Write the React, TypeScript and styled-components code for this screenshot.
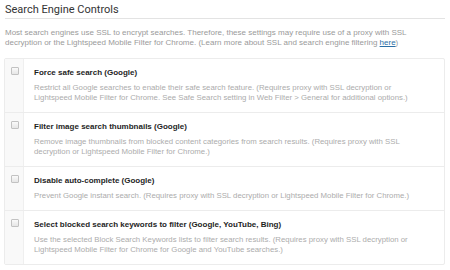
import React from "react";
import styled, { createGlobalStyle } from "styled-components";

const Global = createGlobalStyle`
  html, body { margin: 0; padding: 0; background: #fff; }
  body { font-family: "Liberation Sans", Arial, sans-serif; }
`;

const Page = styled.div`
  width: 450px;
  height: 270px;
  box-sizing: border-box;
  padding: 3px 5px 0 5px;
  overflow: hidden;
`;

const Heading = styled.h2`
  margin: 0;
  font-family: Roboto, "Liberation Sans", sans-serif;
  font-weight: 400;
  font-size: 11px;
  line-height: 13px;
  color: #333;
  padding-bottom: 2px;
  border-bottom: 1px solid #e3e3e3;
  width: 440px;
`;

const Intro = styled.p`
  margin: 9px 0 0 0;
  font-size: 8px;
  line-height: 10px;
  color: #9a9a9a;
  width: 425px;
`;

const Link = styled.a`
  color: #2a6ea6;
  text-decoration: underline;
`;

const Table = styled.div`
  margin-top: 10px;
  width: 441px;
  margin-left: -1px;
  border: 1px solid #ececec;
  border-radius: 2px;
  box-sizing: border-box;
`;

const Row = styled.div<{ $first?: boolean }>`
  display: grid;
  grid-template-columns: 19px 1fr;
  border-top: ${(p) => (p.$first ? "none" : "1px solid #ececec")};
`;

const BoxCell = styled.div`
  background: #f9f9f9;
  border-right: 1px solid #efefef;
  padding-top: 8px;
  display: flex;
  justify-content: center;
  align-items: flex-start;
`;

const Check = styled.input`
  appearance: none;
  -webkit-appearance: none;
  margin: 0 0 0 1px;
  width: 8px;
  height: 8px;
  border: 1px solid #c2c2c2;
  border-radius: 1px;
  background: linear-gradient(#fafafa, #e6e6e6);
  box-sizing: border-box;
`;

const Content = styled.div`
  padding: 8px 17px 9px 10px;
`;

const Title = styled.div`
  font-weight: 700;
  font-size: 8px;
  line-height: 12px;
  color: #1e1e1e;
`;

const Desc = styled.div`
  margin-top: 4px;
  font-size: 7.8px;
  line-height: 10px;
  color: #acacac;
`;

const rows = [
  {
    title: "Force safe search (Google)",
    desc: "Restrict all Google searches to enable their safe search feature. (Requires proxy with SSL decryption or Lightspeed Mobile Filter for Chrome. See Safe Search setting in Web Filter > General for additional options.)",
  },
  {
    title: "Filter image search thumbnails (Google)",
    desc: "Remove image thumbnails from blocked content categories from search results. (Requires proxy with SSL decryption or Lightspeed Mobile Filter for Chrome.)",
  },
  {
    title: "Disable auto-complete (Google)",
    desc: "Prevent Google instant search. (Requires proxy with SSL decryption or Lightspeed Mobile Filter for Chrome.)",
  },
  {
    title: "Select blocked search keywords to filter (Google, YouTube, Bing)",
    desc: "Use the selected Block Search Keywords lists to filter search results. (Requires proxy with SSL decryption or Lightspeed Mobile Filter for Chrome for Google and YouTube searches.)",
  },
];

export default function App() {
  return (
    <>
      <Global />
      <Page>
        <Heading>Search Engine Controls</Heading>
        <Intro>
          Most search engines use SSL to encrypt searches. Therefore, these settings may require use of a proxy with SSL
          decryption or the Lightspeed Mobile Filter for Chrome. (Learn more about SSL and search engine filtering{" "}
          <Link href="#">here</Link>)
        </Intro>
        <Table>
          {rows.map((r, i) => (
            <Row key={i} $first={i === 0}>
              <BoxCell>
                <Check type="checkbox" />
              </BoxCell>
              <Content>
                <Title>{r.title}</Title>
                <Desc>{r.desc}</Desc>
              </Content>
            </Row>
          ))}
        </Table>
      </Page>
    </>
  );
}
